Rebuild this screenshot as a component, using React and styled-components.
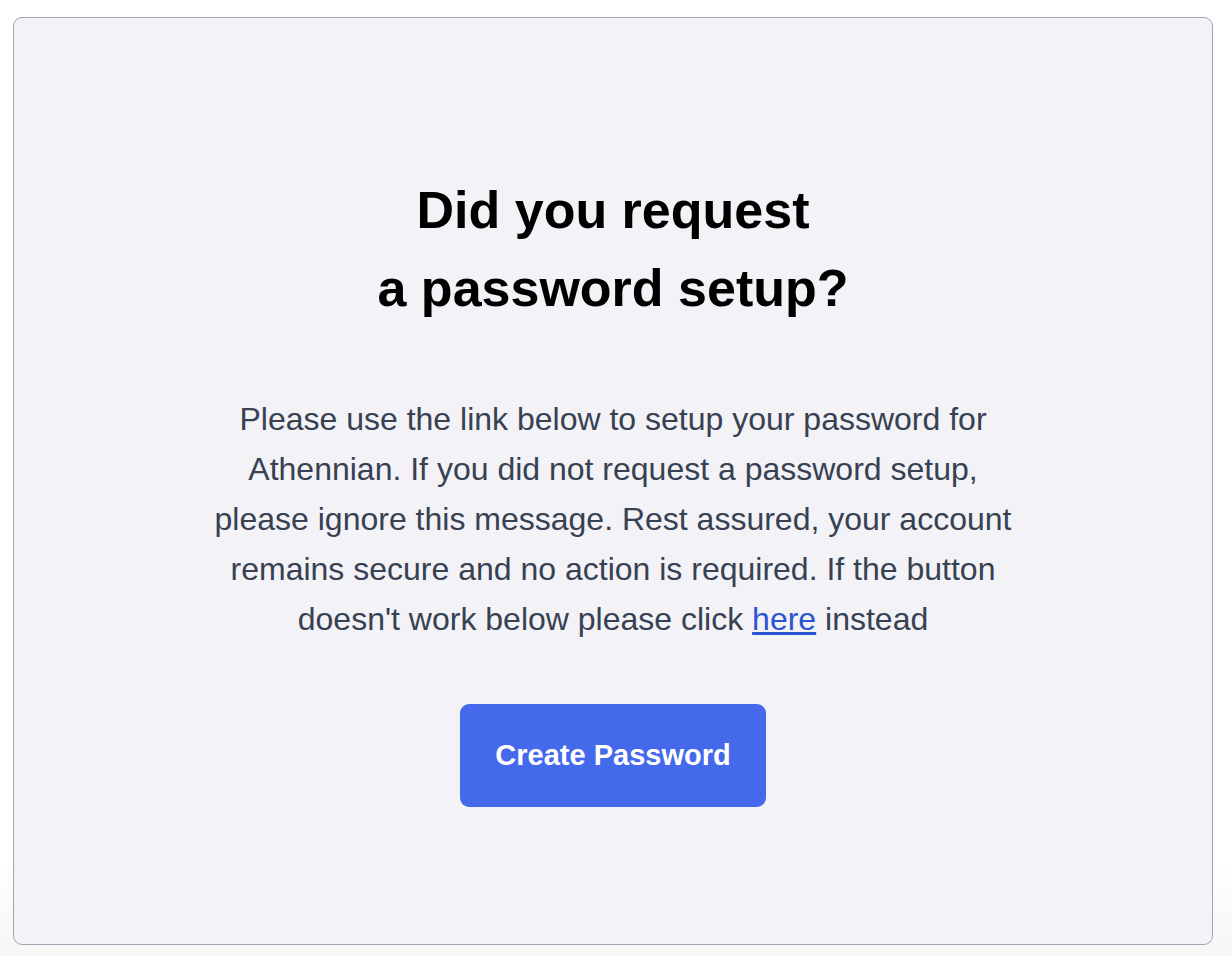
import React from 'react';
import styled, { createGlobalStyle } from 'styled-components';

const GlobalStyle = createGlobalStyle`
  html, body {
    margin: 0;
    background: #ffffff;
  }
  body {
    font-family: "Liberation Sans", Arial, Helvetica, sans-serif;
  }
`

const Page = styled.div`
  padding: 17px 19px 11px 13px;
  box-sizing: border-box;
  height: 956px;
  display: flex;
  background: linear-gradient(#ffffff 0%, #ffffff 90%, #f6f6f6 100%);
`

const Card = styled.div`
  flex: 1;
  background: #f2f2f7;
  border: 1px solid #9ea6b5;
  border-radius: 9px;
  display: flex;
  flex-direction: column;
  align-items: center;
  padding-top: 153px;
`

const Title = styled.h1`
  margin: 0;
  font-size: 52px;
  line-height: 78px;
  font-weight: 700;
  color: #000;
  text-align: center;
`

const Message = styled.p`
  margin: 67px 0 0;
  max-width: 800px;
  font-size: 32px;
  line-height: 50px;
  color: #374151;
  text-align: center;
`

const Link = styled.a`
  color: #2a55d0;
  text-decoration: underline;
`

const Button = styled.button`
  margin-top: 60px;
  width: 306px;
  height: 103px;
  border: none;
  border-radius: 9px;
  background: #4569eb;
  color: #fff;
  font-family: inherit;
  font-size: 29px;
  font-weight: 700;
  cursor: pointer;
`

export default function App() {
  return (
    <>
      <GlobalStyle />
      <Page>
        <Card>
          <Title>
            Did you request
            <br />
            a password setup?
          </Title>
          <Message>
            Please use the link below to setup your password for Athennian. If
            you did not request a password setup, please ignore this message.
            Rest assured, your account remains secure and no action is required.
            If the button doesn't work below please click <Link href="#">here</Link> instead
          </Message>
          <Button>Create Password</Button>
        </Card>
      </Page>
    </>
  )
}
